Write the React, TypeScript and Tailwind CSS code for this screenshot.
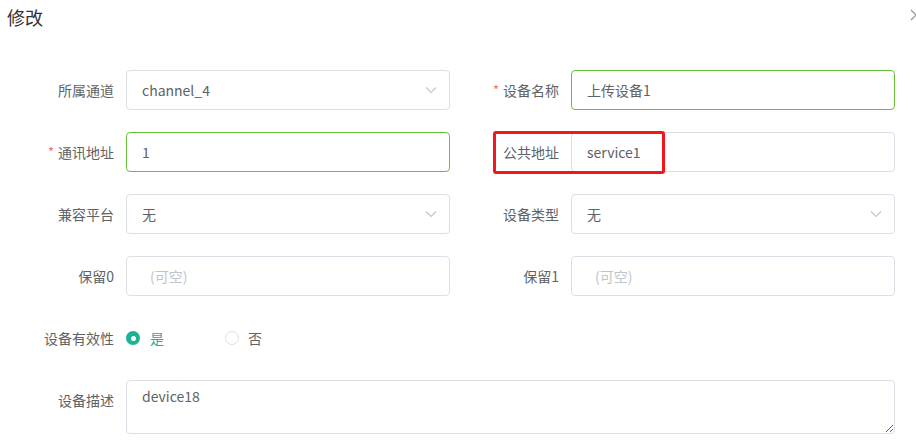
import React from "react";

const font = { fontFamily: '"Noto Sans CJK SC", "Noto Sans", sans-serif' };

function Chevron() {
  return (
    <svg width="12" height="8" viewBox="0 0 12 8" className="shrink-0">
      <path d="M1 1.5 L6 6.5 L11 1.5" fill="none" stroke="#c0c4cc" strokeWidth="1.1" />
    </svg>
  );
}

function Label({ text, required }: { text: string; required?: boolean }) {
  return (
    <div className="w-[121px] h-10 shrink-0 pr-3 flex items-center justify-end text-[14px] text-[#606266]">
      {required && <span className="text-[#f56c6c] mr-1 text-[13px]">*</span>}
      {text}
    </div>
  );
}

function Field({ label, value, required, select, ok, placeholder }: { label: string; value?: string; required?: boolean; select?: boolean; ok?: boolean; placeholder?: string }) {
  return (
    <div className="flex h-10">
      <Label text={label} required={required} />
      <div className={`w-[324px] h-10 rounded border ${ok ? "border-[#67c23a]" : "border-[#dcdfe6]"} bg-white flex items-center pl-[15px] pr-3`}>
        {value ? (
          <span className="flex-1 text-[14px] text-[#606266]">{value}</span>
        ) : (
          <span className="flex-1 text-[14px] text-[#c0c4cc] pl-2">{placeholder}</span>
        )}
        {select && <Chevron />}
      </div>
    </div>
  );
}

export default function App() {
  return (
    <div className="relative w-[916px] h-[448px] bg-white overflow-hidden" style={font}>
      <div className="h-[70px] pl-[7px] pt-[5px]">
        <h1 className="text-[18px] text-[#303133] leading-[24px]">修改</h1>
      </div>
      <button className="absolute top-[9px] right-[-6px]">
        <svg width="12" height="12" viewBox="0 0 12 12">
          <path d="M1 1 L11 11 M11 1 L1 11" stroke="#909399" strokeWidth="1.2" />
        </svg>
      </button>

      <div className="pl-[5px] grid grid-cols-[445px_445px] gap-y-[22px]">
        <Field label="所属通道" value="channel_4" select />
        <Field label="设备名称" value="上传设备1" required ok />
        <Field label="通讯地址" value="1" required ok />
        <div className="relative">
          <Field label="公共地址" value="service1" />
          <div className="absolute left-[43px] top-[-1px] w-[172px] h-[43px] border-[3px] border-[#f5161b] rounded-[3px]" />
        </div>
        <Field label="兼容平台" value="无" select />
        <Field label="设备类型" value="无" select />
        <Field label="保留0" placeholder="(可空)" />
        <Field label="保留1" placeholder="(可空)" />

        <div className="col-span-2 flex h-10">
          <Label text="设备有效性" />
          <div className="flex items-center text-[14px]">
            <span className="w-[14px] h-[14px] rounded-full bg-[#1ab394] flex items-center justify-center">
              <span className="w-[5px] h-[5px] rounded-full bg-white" />
            </span>
            <span className="ml-[10px] text-[#1ab394] w-[75px]">是</span>
            <span className="w-[14px] h-[14px] rounded-full border border-[#dcdfe6] bg-white" />
            <span className="ml-[9px] text-[#606266]">否</span>
          </div>
        </div>

        <div className="col-span-2 flex items-start">
          <Label text="设备描述" />
          <textarea
            defaultValue="device18"
            className="w-[769px] h-[54px] rounded border border-[#dcdfe6] px-[15px] py-[5px] text-[14px] leading-[21px] text-[#606266] outline-none resize-y"
            style={font}
          />
        </div>
      </div>
    </div>
  );
}
